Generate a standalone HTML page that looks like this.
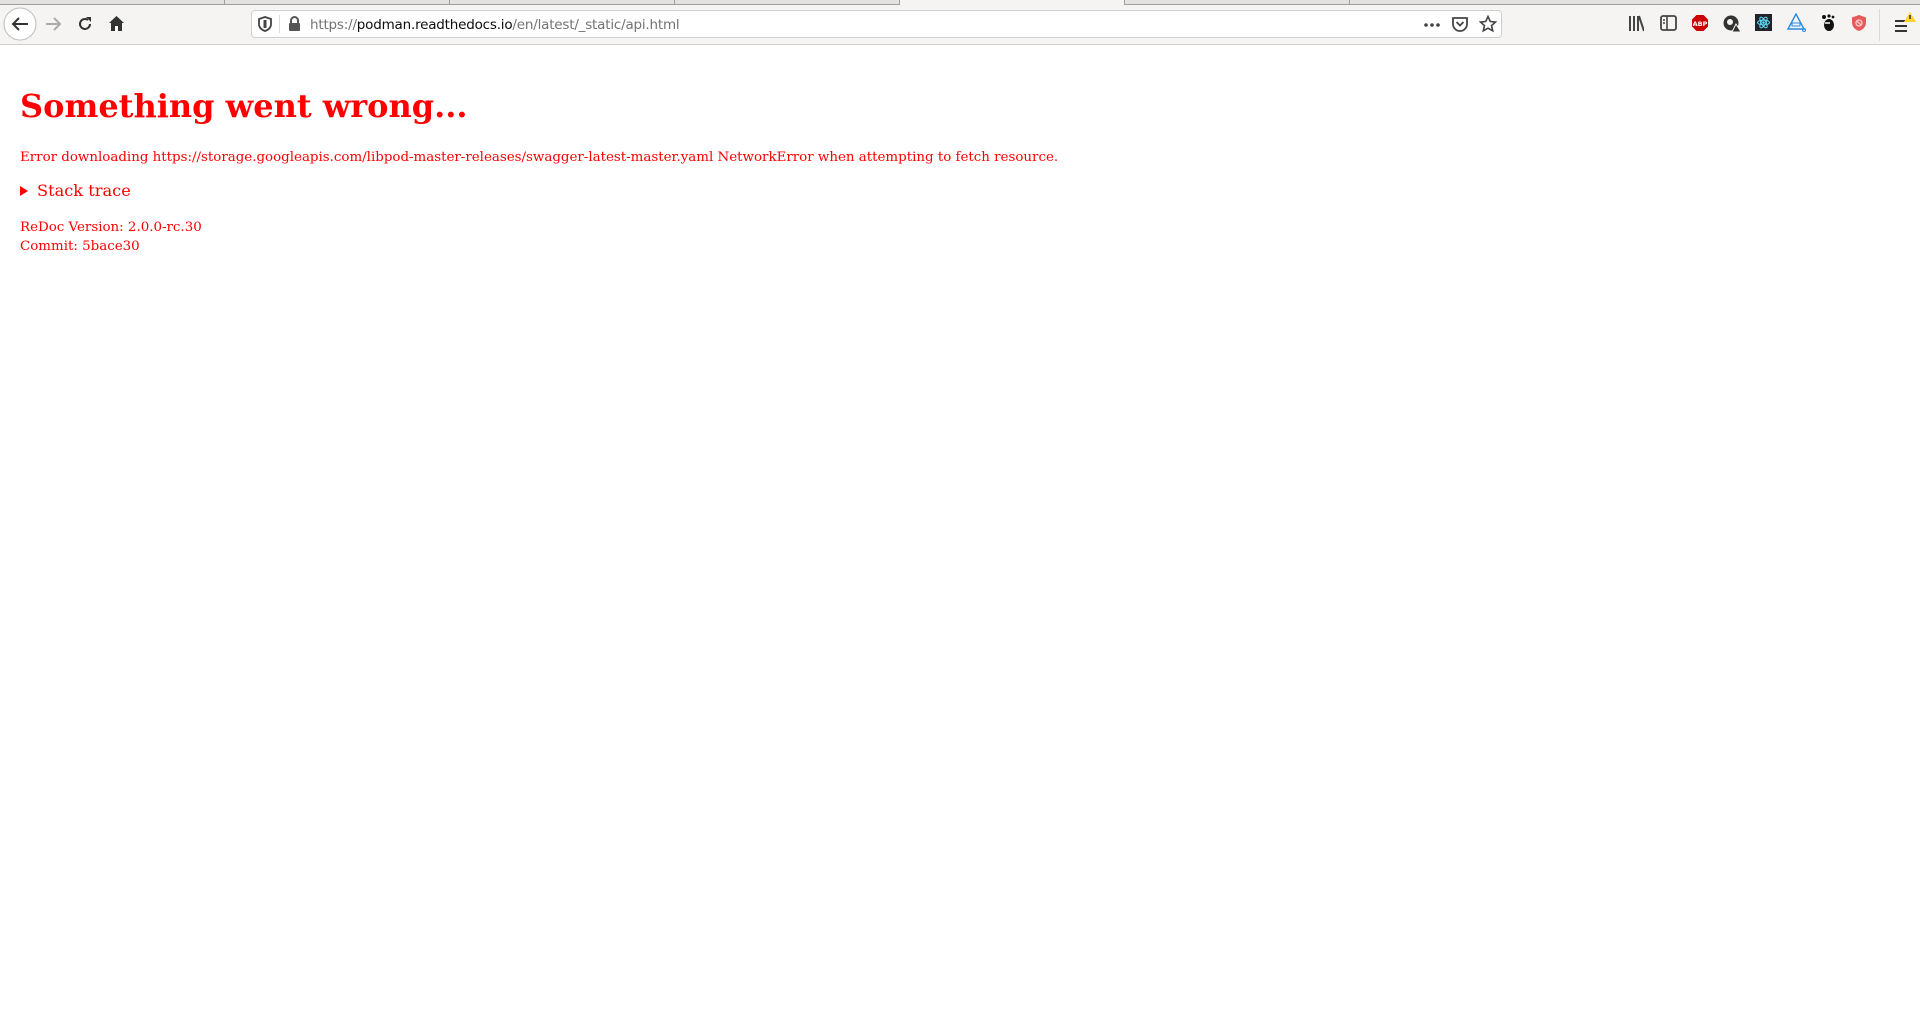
<!DOCTYPE html>
<html><head><meta charset="utf-8"><style>
html,body{margin:0;padding:0;width:1920px;height:1024px;overflow:hidden;background:#fff}
.tabs{position:absolute;left:0;top:0;width:1920px;height:4px;background:#e3e2e0;border-bottom:1px solid #9e9e9e}
.tabs .act{position:absolute;left:900px;width:224px;top:0;height:5px;background:#f5f4f2}
.tabs .sep{position:absolute;top:0;height:4px;width:1px;background:#9e9e9e}
.tb{position:absolute;left:0;top:5px;width:1920px;height:39px;background:#f5f4f2;border-bottom:1px solid #d0cfcd}
.url{position:absolute;left:251px;top:10px;width:1251px;height:28px;background:#fff;border:1px solid #cfcfd0;border-radius:4px;box-sizing:border-box}
.url .t{position:absolute;left:58px;top:6px;font:13.5px "DejaVu Sans","Liberation Sans",sans-serif;color:#737373;letter-spacing:-0.2px}
.url .t b{font-weight:normal;color:#0c0c0d}
svg{position:absolute}
.c{position:absolute;left:20px;font-family:"DejaVu Serif","Liberation Serif",serif;color:#f00;white-space:nowrap}
</style></head><body>
<div class="tabs"><div class="sep" style="left:224px"></div><div class="sep" style="left:449px"></div><div class="sep" style="left:674px"></div><div class="sep" style="left:899px"></div><div class="sep" style="left:1124px"></div><div class="sep" style="left:1349px"></div><div class="act"></div></div>
<div class="tb"></div>
<svg style="left:3px;top:7px" width="34" height="34" viewBox="0 0 34 34"><circle cx="17" cy="17" r="16" fill="#fff" stroke="#bbb"/><path d="M25 17H10M16 11l-6 6 6 6" stroke="#333" stroke-width="2" fill="none"/></svg>
<svg style="left:44px;top:15px" width="18" height="18" viewBox="0 0 18 18"><path d="M2 9h14M10 3l6 6-6 6" stroke="#aaa" stroke-width="2" fill="none"/></svg>
<svg style="left:77px;top:16px" width="16" height="16" viewBox="0 0 16 16"><path d="M13 8a5 5 0 1 1-2-4" stroke="#333" stroke-width="2" fill="none"/><path d="M9 1h5v5z" fill="#333"/></svg>
<svg style="left:108px;top:15px" width="17" height="17" viewBox="0 0 17 17"><path d="M8.5 1L1 8h2v8h4v-5h3v5h4V8h2z" fill="#333"/><rect x="7" y="11" width="3" height="5" fill="#fff"/></svg>
<div class="url"><svg style="left:6px;top:5px" width="14" height="16" viewBox="0 0 14 16"><path d="M7 1L1 3v5c0 4 3 6 6 7 3-1 6-3 6-7V3z" fill="none" stroke="#444" stroke-width="1.8"/><path d="M7 4v8" stroke="#444" stroke-width="3"/></svg><div style="position:absolute;left:27px;top:4px;width:1px;height:18px;background:#ddd"></div><svg style="left:36px;top:5px" width="13" height="15" viewBox="0 0 13 15"><path d="M3 7V4.5a3.5 3.5 0 0 1 7 0V7" stroke="#555" stroke-width="2" fill="none"/><rect x="1" y="7" width="11" height="8" rx="1" fill="#555"/></svg><div class="t">https://<b>podman.readthedocs.io</b>/en/latest/_static/api.html</div>
<svg style="left:1172px;top:11px" width="16" height="6"><circle cx="2" cy="3" r="1.8" fill="#444"/><circle cx="8" cy="3" r="1.8" fill="#444"/><circle cx="14" cy="3" r="1.8" fill="#444"/></svg>
<svg style="left:1200px;top:5px" width="16" height="16" viewBox="0 0 16 16"><path d="M1 2h14v6a7 7 0 0 1-14 0z" fill="none" stroke="#444" stroke-width="1.8"/><path d="M4.5 6L8 9.5 11.5 6" stroke="#444" stroke-width="1.8" fill="none"/></svg>
<svg style="left:1227px;top:4px" width="18" height="18" viewBox="0 0 18 18"><path d="M9 1.5l2.3 5 5.2.5-4 3.6 1.2 5.2L9 13.2 4.3 15.8l1.2-5.2-4-3.6 5.2-.5z" fill="none" stroke="#444" stroke-width="1.6"/></svg>
</div>
<svg style="left:1628px;top:15px" width="16" height="18"><path d="M2 1v15M6 1v15M10 1v15M11 1l5 15" stroke="#444" stroke-width="2"/></svg>
<svg style="left:1660px;top:15px" width="17" height="16"><rect x="1" y="1" width="15" height="14" rx="2" fill="none" stroke="#444" stroke-width="1.8"/><path d="M7 1v14M3 5h2M3 8h2" stroke="#444" stroke-width="1.6"/></svg>
<svg style="left:1691px;top:14px" width="18" height="18" viewBox="0 0 18 18"><path d="M5.5 1h7L17 5.5v7L12.5 17h-7L1 12.5v-7z" fill="#c00"/><text x="9" y="12" font-size="6.5" font-family="DejaVu Sans" font-weight="bold" fill="#fff" text-anchor="middle">ABP</text></svg>
<svg style="left:1723px;top:14px" width="18" height="18"><circle cx="8" cy="9" r="7.5" fill="#333"/><circle cx="7" cy="8" r="3" fill="#f5f4f2"/><path d="M13 10l5 8h-9z" fill="#333" stroke="#f5f4f2"/></svg>
<svg style="left:1755px;top:14px" width="17" height="17"><rect width="17" height="17" fill="#20232a"/><ellipse cx="8.5" cy="8.5" rx="6" ry="2.4" fill="none" stroke="#61dafb"/><ellipse cx="8.5" cy="8.5" rx="6" ry="2.4" fill="none" stroke="#61dafb" transform="rotate(60 8.5 8.5)"/><ellipse cx="8.5" cy="8.5" rx="6" ry="2.4" fill="none" stroke="#61dafb" transform="rotate(-60 8.5 8.5)"/><circle cx="8.5" cy="8.5" r="1.3" fill="#61dafb"/></svg>
<svg style="left:1787px;top:13px" width="19" height="19"><path d="M9 1L1 16h16z" fill="none" stroke="#2a8ae0" stroke-width="1.4"/><rect x="5" y="10" width="8" height="3" fill="none" stroke="#2a8ae0"/><circle cx="17" cy="17" r="1.5" fill="none" stroke="#2a8ae0"/></svg>
<svg style="left:1820px;top:14px" width="16" height="18"><ellipse cx="9" cy="11" rx="5" ry="6" fill="#111"/><circle cx="4" cy="3" r="2" fill="#111"/><circle cx="9" cy="2" r="1.6" fill="#111"/><circle cx="13" cy="3" r="1.4" fill="#111"/><path d="M5 9h5" stroke="#fff" stroke-width="1.5"/></svg>
<svg style="left:1851px;top:14px" width="16" height="18"><path d="M8 1L1 3.5v5C1 13 4.5 16 8 17c3.5-1 7-4 7-8.5v-5z" fill="#e85a5a"/><circle cx="8" cy="9" r="3" fill="none" stroke="#fcc" stroke-width="1.3"/><path d="M6 7l4 4" stroke="#fcc" stroke-width="1.3"/></svg>
<div style="position:absolute;left:1879px;top:9px;width:1px;height:32px;background:#d8d8d8"></div>
<svg style="left:1893px;top:10px" width="27" height="26"><path d="M2 11h12M2 16h12M2 21h12" stroke="#333" stroke-width="2"/><path d="M17 2l-6 10h12z" fill="#ffd42a"/><path d="M17 5v4" stroke="#333" stroke-width="1.5"/></svg>
<div class="c" style="top:87px;font-size:32px;font-weight:bold">Something went wrong...</div>
<div class="c" style="top:150px;font-size:13.4px">Error downloading https://storage.googleapis.com/libpod-master-releases/swagger-latest-master.yaml NetworkError when attempting to fetch resource.</div>
<svg style="left:20px;top:186px" width="9" height="10"><path d="M0 0l8 5-8 5z" fill="#f00"/></svg>
<div class="c" style="left:37px;top:181px;font-size:16.2px">Stack trace</div>
<div class="c" style="top:218px;font-size:13.4px;line-height:19px">ReDoc Version: 2.0.0-rc.30<br>Commit: 5bace30</div>
</body></html>
